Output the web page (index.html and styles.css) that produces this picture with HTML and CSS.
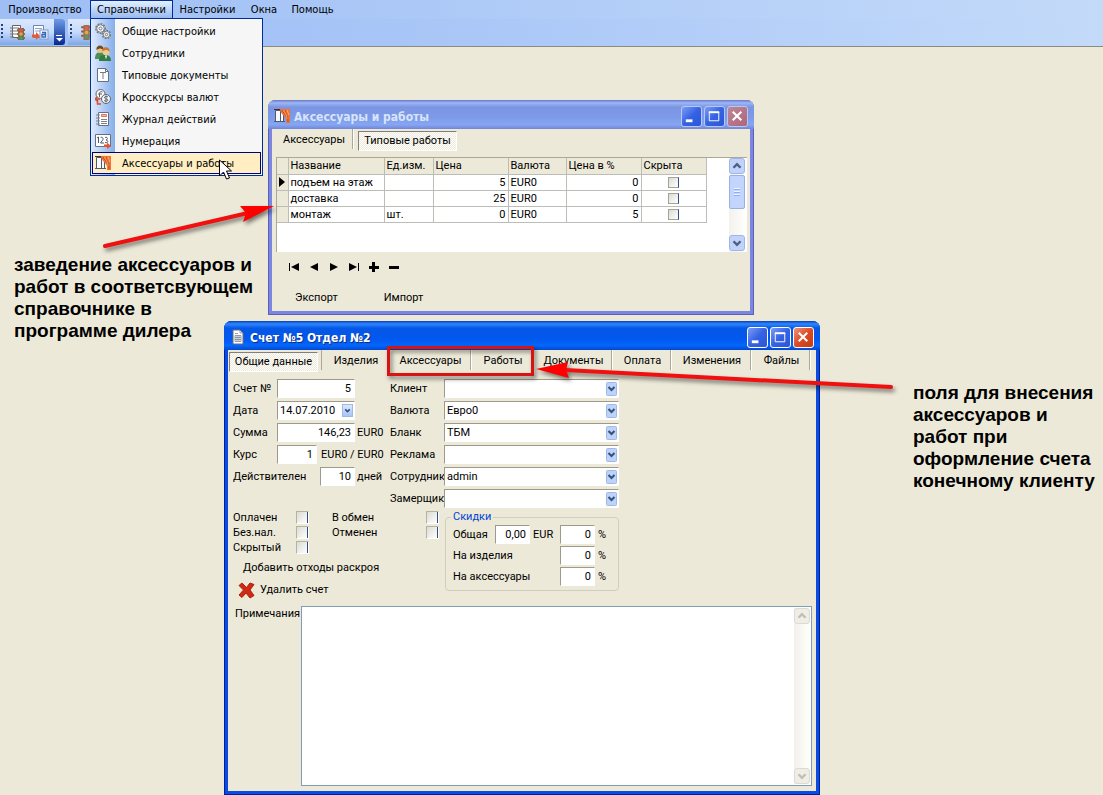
FILE: index.html
```html
<!DOCTYPE html>
<html lang="ru">
<head>
<meta charset="utf-8">
<title>Счет №5 Отдел №2</title>
<link rel="stylesheet" href="styles.css">
</head>
<body>
<svg class="defs" width="0" height="0" aria-hidden="true">
  <defs>
    <symbol id="curtain" viewBox="0 0 16 16">
      <path d="M1.500 2.500h8v11h-8z" fill="#f7f9fd" stroke="#4f5b70"/>
      <path d="M6.500 3v10M0 13.500h11" stroke="#4f5b70" fill="none"/>
      <path d="M0 1.500h16" stroke="#5a2a16"/>
      <path d="M6 1h10v14h-4c1-4-1-6-3-8S6 3 6 1z" fill="#ee7436"/>
      <path d="M8 2c1 3 4 4 5 8M11 2c.5 3 3 5 3 12" stroke="#b6441a" stroke-width=".8" fill="none"/>
      <path d="M9.500 2c1 3 3.500 4 3.500 9M13 2l2 5" stroke="#ffb486" stroke-width=".8" fill="none"/>
    </symbol>
    <symbol id="light" viewBox="0 0 16 16">
      <path d="M3 3h10M3 7h10M3 11h10" stroke="#a0522a" stroke-width="2"/>
      <rect x="5" y="1" width="6" height="14" rx="1" fill="#8c7460"/>
      <circle cx="8" cy="4" r="1.800" fill="#ee5b3c"/><circle cx="8" cy="8" r="1.800" fill="#f3a13c"/><circle cx="8" cy="12" r="1.800" fill="#4fa05c"/>
    </symbol>
    <symbol id="min" viewBox="0 0 20 20"><path d="M4 13h7v3H4z" fill="#fff"/></symbol>
    <symbol id="max" viewBox="0 0 20 20"><path d="M4.500 5.500h10v9h-10z" fill="none" stroke="#fff"/><path d="M4 4.500h11v2H4z" fill="#fff"/></symbol>
    <symbol id="close" viewBox="0 0 20 20"><path d="M5 5l9 9M14 5l-9 9" stroke="#fff" stroke-width="2.200"/></symbol>
    <symbol id="up" viewBox="0 0 16 16"><path d="M4 10l4-4 4 4" fill="none" stroke="currentColor" stroke-width="2.800"/></symbol>
    <symbol id="down" viewBox="0 0 16 16"><path d="M4 6l4 4 4-4" fill="none" stroke="currentColor" stroke-width="2.800"/></symbol>
  </defs>
</svg>

<header class="top">
  <nav class="menubar">
    <button type="button" class="m1">Производство</button>
    <button type="button" class="m2 open" aria-expanded="true">Справочники</button>
    <button type="button" class="m3">Настройки</button>
    <button type="button" class="m4">Окна</button>
    <button type="button" class="m5">Помощь</button>
  </nav>
  <div class="toolbar">
    <div class="bar">
      <span class="grip"></span>
      <button type="button" aria-label="Производство"><svg width="17" height="17" viewBox="0 0 17 17"><path d="M3.500 1.500h8v12h-8z" fill="#fff" stroke="#666"/><path d="M1 4h4M1 7h4M1 10h4M1 13h4M5 4h5M5 7h4M5 10h4" stroke="#777"/><path d="M8 6h8M8 10h8M8 14h8" stroke="#9b4a20" stroke-width="1.500"/><rect x="9" y="4" width="6" height="12" fill="#7c6a58"/><circle cx="12" cy="6" r="1.800" fill="#f0503a"/><circle cx="12" cy="10" r="1.800" fill="#f2a03c"/><circle cx="12" cy="14" r="1.800" fill="#38a35a"/></svg></button>
      <button type="button" aria-label="Экспорт"><svg width="17" height="17" viewBox="0 0 17 17"><path d="M1.500 1.500h10v12h-10z" fill="#fff" stroke="#6d86b4"/><path d="M3 4.500h7M3 7h5" stroke="#91a4c4"/><rect x="8" y="6" width="8" height="9" fill="#f4f8ff" stroke="#7d9bd0"/><path d="M10 8.500h3.500V13H10v-2.500h3" fill="none" stroke="#3065b5" stroke-width="1.400"/><path d="M0 10.500h4V8l4 4-4 4v-2.500H0z" fill="#e85a32"/></svg></button>
      <button type="button" class="more" aria-label="Ещё"><svg width="9" height="9" viewBox="0 0 9 9"><path d="M1 1.500h6" stroke="#fff"/><path d="M1 4h7L4.500 7.500z" fill="#fff"/></svg></button>
    </div>
    <div class="bar second">
      <span class="grip"></span>
      <button type="button" aria-label="Светофор"><svg width="17" height="17"><use href="#light"/></svg></button>
    </div>
  </div>
</header>

<ul class="dropdown">
  <li><button type="button"><svg viewBox="0 0 16 16"><g fill="#f8f8f8" stroke="#737983"><circle cx="5.500" cy="5.500" r="4.600" stroke-width="1.600" stroke-dasharray="2 1"/><circle cx="5.500" cy="5.500" r="3.800"/><circle cx="5.500" cy="5.500" r="1.500"/><circle cx="11.500" cy="11.500" r="4" stroke-width="1.600" stroke-dasharray="2 1"/><circle cx="11.500" cy="11.500" r="3.200"/><circle cx="11.500" cy="11.500" r="1.200"/></g></svg><span>Общие настройки</span></button></li>
  <li><button type="button"><svg viewBox="0 0 16 16"><path d="M0 14c0-5 2-7 5-7s5 2 5 7z" fill="#4b9156"/><circle cx="5" cy="5" r="3" fill="#f2c181"/><path d="M1.500 5c-1-6 8-6 7 0-2-2-4-2-7 0z" fill="#6c4a26"/><path d="M4 16c0-5 2-6 6-6s6 2 6 6z" fill="#337c43"/><circle cx="11" cy="7" r="3.300" fill="#f5c98e"/><path d="M7.500 6.500c-1-6 8-5 7 0-2-2-4-2-7 0z" fill="#be7b32"/><path d="M10 10.500h2l-1 4z" fill="#fff"/></svg><span>Сотрудники</span></button></li>
  <li><button type="button"><svg viewBox="0 0 16 16"><path d="M2.500 1.500h8l3 3v10h-11z" fill="#fff" stroke="#66717f"/><path d="M10.500 1.500v3h3" fill="none" stroke="#66717f"/><path d="M5 5.500h6M8 5.500V12" stroke="#6f7c8c"/></svg><span>Типовые документы</span></button></li>
  <li><button type="button"><svg viewBox="0 0 16 16"><g fill="#f7f7f7" stroke="#5f6670"><circle cx="5.500" cy="5" r="4.500"/><circle cx="11" cy="10" r="4.500"/><path d="M7.500 3c-2-1-3 0-3 2v3M3 5h4M13 8c-2-1-4-.5-3.500 1s3.500.5 3.500 2-2 1.500-4 .5M11 6.500v7" fill="none"/></g><path d="M0 10h5M2 8l-2 2 2 2M2.500 10v5H6" fill="none" stroke="#d94f2f" stroke-width="1.500"/></svg><span>Кросскурсы валют</span></button></li>
  <li><button type="button"><svg viewBox="0 0 16 16"><path d="M3.500 1.500h10v13h-10z" fill="#fff" stroke="#66717f"/><path d="M1 4h4M1 7h4M1 10h4M1 13h4M6 8.500h6M6 10.500h6M6 12.500h6" stroke="#7b828c"/><path d="M6.500 3.500h5v2h-5z" fill="#f5b7ac" stroke="#d77865"/></svg><span>Журнал действий</span></button></li>
  <li><button type="button"><svg viewBox="0 0 16 16"><path d="M.5 1.500h15v12H.5z" fill="#fff" stroke="#66717f"/><path d="M2 5l1.500-1v6M5.500 5c1-1.500 3-.5 2.500 1.500L5.500 10H9M10 4.500c3-1 3 2 1 2.500 3 .5 2 3.500-1 2.500" fill="none" stroke="#4d5560"/><path d="M9 11.500h3v-2l4 3.500-4 3v-2H9z" fill="#e6532f"/></svg><span>Нумерация</span></button></li>
  <li><button type="button" class="hot"><svg><use href="#curtain"/></svg><span>Аксессуары и работы</span></button></li>
</ul>

<main class="desktop">
  <section class="window dir">
    <div class="titlebar">
      <svg class="ticon" width="16" height="16"><use href="#curtain"/></svg>
      <h2>Аксессуары и работы</h2>
      <button type="button" class="cap" aria-label="Свернуть"><svg><use href="#min"/></svg></button>
      <button type="button" class="cap" aria-label="Развернуть"><svg><use href="#max"/></svg></button>
      <button type="button" class="cap x" aria-label="Закрыть"><svg><use href="#close"/></svg></button>
    </div>
    <div class="client">
      <div class="tabs tabs-dir" role="tablist">
        <button type="button" role="tab">Аксессуары</button>
        <button type="button" role="tab" class="active" aria-selected="true">Типовые работы</button>
      </div>
      <div class="gridbox">
        <table>
          <colgroup><col class="c0"><col class="c1"><col class="c2"><col class="c3"><col class="c4"><col class="c3"><col class="c5"></colgroup>
          <thead><tr><th></th><th>Название</th><th>Ед.изм.</th><th>Цена</th><th>Валюта</th><th>Цена в %</th><th>Скрыта</th></tr></thead>
          <tbody>
            <tr><td class="ind"><svg width="6" height="10" viewBox="0 0 6 10"><path d="M0 0l6 5-6 5z"/></svg></td><td>подъем на этаж</td><td></td><td class="n">5</td><td>EUR0</td><td class="n">0</td><td class="k"><input type="checkbox" aria-label="Скрыта"></td></tr>
            <tr><td class="ind"></td><td>доставка</td><td></td><td class="n">25</td><td>EUR0</td><td class="n">0</td><td class="k"><input type="checkbox" aria-label="Скрыта"></td></tr>
            <tr><td class="ind"></td><td>монтаж</td><td>шт.</td><td class="n">0</td><td>EUR0</td><td class="n">5</td><td class="k"><input type="checkbox" aria-label="Скрыта"></td></tr>
          </tbody>
        </table>
        <div class="scroll blue">
          <button type="button" aria-label="Вверх"><svg><use href="#up"/></svg></button>
          <span class="thumb"></span>
          <button type="button" aria-label="Вниз"><svg><use href="#down"/></svg></button>
        </div>
      </div>
      <div class="navigator">
        <button type="button" aria-label="Первая"><svg viewBox="0 0 12 10"><path d="M1 1h1v8H1zM11 1v8L3 5z"/></svg></button>
        <button type="button" aria-label="Предыдущая"><svg viewBox="0 0 12 10"><path d="M10 1v8L2 5z"/></svg></button>
        <button type="button" aria-label="Следующая"><svg viewBox="0 0 12 10"><path d="M2 1v8l8-4z"/></svg></button>
        <button type="button" aria-label="Последняя"><svg viewBox="0 0 12 10"><path d="M10 1h1v8h-1zM1 1v8l8-4z"/></svg></button>
        <button type="button" aria-label="Добавить"><svg viewBox="0 0 12 10"><path d="M4 0h3v4h4v3H7v3H4V7H1V4h3z"/></svg></button>
        <button type="button" aria-label="Удалить"><svg viewBox="0 0 12 10"><path d="M1 4h10v3H1z"/></svg></button>
      </div>
      <div class="links"><button type="button">Экспорт</button><button type="button">Импорт</button></div>
    </div>
  </section>

  <section class="window bill">
    <div class="titlebar">
      <svg class="ticon" width="16" height="16" viewBox="0 0 16 16"><path d="M3 1h7l3 3v11H3z" fill="#fff" stroke="#66717f"/><path d="M10 1v3h3M5 4.500h3M5 6.500h6v6H5zM5 8.500h6M5 10.500h6M7 6.500v6M9 6.500v6" fill="none" stroke="#7d8794" stroke-width=".8"/></svg>
      <h2>Счет №5 Отдел №2</h2>
      <button type="button" class="cap" aria-label="Свернуть"><svg><use href="#min"/></svg></button>
      <button type="button" class="cap" aria-label="Развернуть"><svg><use href="#max"/></svg></button>
      <button type="button" class="cap x" aria-label="Закрыть"><svg><use href="#close"/></svg></button>
    </div>
    <div class="client">
      <div class="tabs tabs-bill" role="tablist">
        <button type="button" role="tab" class="active" aria-selected="true">Общие данные</button>
        <button type="button" role="tab">Изделия</button>
        <button type="button" role="tab">Аксессуары</button>
        <button type="button" role="tab">Работы</button>
        <button type="button" role="tab">Документы</button>
        <button type="button" role="tab">Оплата</button>
        <button type="button" role="tab">Изменения</button>
        <button type="button" role="tab">Файлы</button>
      </div>
      <form class="form">
        <div class="fields">
          <div class="col">
            <div class="row"><label for="no">Счет №</label><input id="no" class="w78 num" value="5"></div>
            <div class="row"><label for="dt">Дата</label><span class="date w78"><input id="dt" value="14.07.2010"><button type="button" aria-label="Календарь"><svg><use href="#down"/></svg></button></span></div>
            <div class="row"><label for="sum">Сумма</label><input id="sum" class="w78 num" value="146,23"><span class="unit">EUR0</span></div>
            <div class="row"><label for="rate">Курс</label><input id="rate" class="w40 num" value="1"><span class="unit">EUR0 / EUR0</span></div>
            <div class="row"><label for="days" class="long">Действителен</label><input id="days" class="w35 num" value="10"><span class="unit">дней</span></div>
          </div>
          <div class="col right">
            <div class="row"><label for="cl">Клиент</label><select id="cl"><option></option></select></div>
            <div class="row"><label for="cur">Валюта</label><select id="cur"><option>Евро0</option></select></div>
            <div class="row"><label for="bl">Бланк</label><select id="bl"><option>ТБМ</option></select></div>
            <div class="row"><label for="ad">Реклама</label><select id="ad"><option></option></select></div>
            <div class="row"><label for="em">Сотрудник</label><select id="em"><option>admin</option></select></div>
            <div class="row"><label for="me">Замерщик</label><select id="me"><option></option></select></div>
          </div>
        </div>
        <div class="lower">
          <div class="flags">
            <div class="checks">
              <label for="f1">Оплачен</label><input type="checkbox" id="f1"><label for="f4">В обмен</label><input type="checkbox" id="f4">
              <label for="f2">Без.нал.</label><input type="checkbox" id="f2"><label for="f5">Отменен</label><input type="checkbox" id="f5">
              <label for="f3">Скрытый</label><input type="checkbox" id="f3">
            </div>
            <button type="button" class="act">Добавить отходы раскроя</button>
            <button type="button" class="act del"><svg width="18" height="17" viewBox="0 0 18 17"><path d="M4 1l4.500 4.500L12 1l4 1.500L12 8l4 5.500-4 2.500-4-5-4 4.500L1 13l4.500-5L1 3.500z" fill="#cf2b12" stroke="#a82410"/></svg>Удалить счет</button>
          </div>
          <fieldset>
            <legend>Скидки</legend>
            <div class="drow"><label for="d1">Общая</label><input id="d1" class="w35 num" value="0,00"><span class="eur">EUR</span><input class="w35 num" aria-label="Общая, %" value="0"><span>%</span></div>
            <div class="drow"><label for="d2">На изделия</label><input id="d2" class="w35 num" value="0"><span>%</span></div>
            <div class="drow"><label for="d3">На аксессуары</label><input id="d3" class="w35 num" value="0"><span>%</span></div>
          </fieldset>
        </div>
        <div class="notes">
          <label for="nt">Примечания</label>
          <div class="memo">
            <textarea id="nt"></textarea>
            <div class="scroll grey">
              <button type="button" aria-label="Вверх"><svg><use href="#up"/></svg></button>
              <button type="button" aria-label="Вниз"><svg><use href="#down"/></svg></button>
            </div>
          </div>
        </div>
      </form>
    </div>
  </section>

  <p class="callout one">заведение аксессуаров и<br>работ в соответсвующем<br>справочнике в<br>программе дилера</p>
  <p class="callout two">поля для внесения<br>аксессуаров и<br>работ при<br>оформление счета<br>конечному клиенту</p>
</main>

<svg class="marks" width="1103" height="795" viewBox="0 0 1103 795" aria-hidden="true">
  <g class="shadow">
    <path d="M105 246L248 213" stroke="#f01010" stroke-width="4" stroke-linecap="round"/>
    <path d="M274 206l-34 0 6 7-3 9z" fill="#f00"/>
    <path d="M891 387L565 370" stroke="#f01010" stroke-width="4" stroke-linecap="round"/>
    <path d="M536 369l32-7-2 8 3 8z" fill="#f00"/>
    <path d="M388.500 347.500h144v27h-144z" fill="none" stroke="#d81313" stroke-width="3"/>
  </g>
  <path d="M219.500 160v16l4-4 3 7 3-1-3-7h5z" fill="#fff" stroke="#000"/>
</svg>
</body>
</html>
```
FILE: styles.css
```css
* { box-sizing: border-box; }
body {
  margin: 0;
  min-height: 100vh;
  overflow: hidden;
  position: relative;
  background: #ece9d8;
  color: #000;
  font: 11px/16px Roboto, "Liberation Sans", sans-serif;
}
button, input, select, textarea { font: inherit; color: inherit; margin: 0; }
button { border: 0; padding: 0; background: none; white-space: nowrap; }
svg { display: block; flex: none; }
.defs { position: absolute; }

/* Menu and toolbar */
.top { background: #a6c3f7; border-bottom: 1px solid #8b8b80; font: 11px/16px "DejaVu Sans Condensed", "Noto Sans", sans-serif; }
.menubar { display: flex; height: 19px; background: linear-gradient(90deg, #9ebef5, #c3daf9); }
.menubar button { height: 19px; }
.m1 { width: 90px; }
.m2 { width: 83px; }
.m3 { width: 69px; }
.m4 { width: 44px; }
.m5 { width: 53px; }
.menubar .open { border: 1px solid #002d96; border-bottom: 0; background: linear-gradient(#e3efff, #93b7ee); }
.toolbar { display: flex; gap: 3px; height: 27px; background: linear-gradient(90deg, #9ebef5, #a9c6f7 40%, #c3daf9); }
.bar { display: flex; align-items: center; gap: 6px; height: 26px; width: 65px; background: linear-gradient(#dbe9ff, #c6dafa 50%, #7ea7e6); border-radius: 0 3px 3px 0; }
.second { width: 180px; }
.grip { width: 2px; height: 16px; margin-left: 1px; background: repeating-linear-gradient(#27417f 0 2px, transparent 2px 4px); flex: none; }
.bar button { flex: none; }
.second .grip { margin-left: 2px; }
.bar .more { width: 11px; height: 26px; margin-left: -1px; display: flex; align-items: flex-end; justify-content: center; padding-bottom: 2px; background: linear-gradient(#6f9be6, #06288f); border-radius: 0 3px 3px 0; }

.dropdown {
  position: absolute; z-index: 3; top: 18px; left: 90px; width: 173px;
  margin: 0; padding: 1px; list-style: none;
  border: 1px solid #002d96;
  background: linear-gradient(90deg, #dfebff, #86aeea 24px, #f6f6f6 24px);
  font: 11px/16px "DejaVu Sans Condensed", "Noto Sans", sans-serif;
}
.dropdown button { display: flex; align-items: center; gap: 11px; width: 100%; height: 22px; padding: 0 2px; border: 1px solid transparent; text-align: left; }
.dropdown span { padding-top: 2px; }
.dropdown svg { width: 16px; height: 16px; }
.dropdown .hot { border-color: #000080; background: #ffeec2; }

/* Windows */
.window { position: absolute; padding: 0 4px 4px; border-radius: 8px 8px 0 0; }
.dir { left: 268px; top: 100px; width: 486px; background: #7a86df; box-shadow: inset 0 0 0 1px #5a5fbe; }
.bill { left: 224px; top: 321px; width: 596px; background: #0a4be0; box-shadow: inset 0 0 0 1px #001ea0; }
.titlebar { display: flex; align-items: center; gap: 2px; height: 29px; margin: 0 -4px; padding: 3px 6px 0; border-radius: 7px 7px 0 0; }
.dir .titlebar { background: linear-gradient(#6a76ce, #9cb6f4 10%, #7b95e2 25%, #7d9ae8 60%, #86a6f2 85%, #7285d8); color: #d8e4f8; }
.bill .titlebar { background: linear-gradient(#0840b8, #2f86ff 10%, #0557e4 25%, #0257ee 60%, #0566fb 85%, #0148cc); color: #fff; }
.bill h2 { text-shadow: 1px 1px #0a2f80; }
.titlebar h2 { flex: 1; margin: 0 0 0 2px; padding-top: 2px; font: bold 12px/18px "DejaVu Sans Condensed", "Noto Sans", sans-serif; white-space: nowrap; }
.cap { width: 21px; height: 21px; border: 1px solid #fff; border-radius: 3px; background: linear-gradient(135deg, #7b9df5, #3562e4 50%, #2b56d8); }
.cap svg { width: 19px; height: 19px; }
.cap.x { background: linear-gradient(135deg, #f0937a, #dc4a24 50%, #c63b14); }
.dir .cap { border-color: #b9c8f3; }
.dir .cap.x { background: linear-gradient(135deg, #bb8898, #b0647a); }
.client { background: #ece9d8; }

.tabs { display: grid; height: 22px; }
.tabs-dir { grid-template-columns: 81px 107px; }
.tabs-bill { grid-template-columns: 93px 67px 83px 62px 79px 59px 80px 59px; }
.tabs button { border-right: 1px solid #aca899; box-shadow: 1px 0 #fff; height: 20px; padding: 2px 0 0 3px; }
.tabs-dir button:first-child { padding-left: 4px; }
.tabs .active {
  margin: 2px 3px 0 5px; padding: 0; height: 20px; border: 1px solid; border-color: #808080 #fff #fff #808080; box-shadow: none;
  background: repeating-conic-gradient(#fff 0 25%, #ece9d8 0 50%) 0 0 / 2px 2px;
}
.tabs-bill .active { margin: 2px 3px 0 1px; }
.tabs-bill .active + button { border-left: 1px solid #aca899; }

/* Grid */
.gridbox { display: flex; justify-content: space-between; height: 95px; margin: 6px 3px 0 4px; background: #fff; border-top: 1px solid #aca899; border-left: 1px solid #aca899; }
table { border-collapse: collapse; table-layout: fixed; width: 429px; align-self: flex-start; }
.c0 { width: 11px; } .c1 { width: 96px; } .c2 { width: 49px; } .c3 { width: 75px; } .c4 { width: 58px; } .c5 { width: 65px; }
th, td { height: 16px; padding: 0 2px; line-height: 15px; font-weight: normal; text-align: left; white-space: nowrap; border-right: 1px solid #bdbdb8; border-bottom: 1px solid #bdbdb8; }
th, .ind { background: #ece9d8; }
.n { text-align: right; }
.k { text-align: center; }
.ind svg { width: 6px; height: 10px; }
.k input { display: block; margin: 0 auto; width: 11px; height: 11px; }

input[type="checkbox"] { appearance: none; border: 1px solid #a5a297; border-right: 1px solid #2b4f86; background: linear-gradient(135deg, #dcdcd4, #fff); }

.scroll { display: flex; flex-direction: column; justify-content: space-between; width: 16px; background: linear-gradient(90deg, #f3f1ec, #fefefb); }
.scroll button { width: 16px; height: 16px; border: 1px solid #fff; border-radius: 3px; }
.scroll svg { width: 14px; height: 14px; }
.blue { margin-right: 2px; color: #4d6185; padding-bottom: 1px; }
.blue button { background: #c1d3fb; border-color: #9eb5e8; }
.thumb { height: 34px; margin: 1px 0 auto; border: 1px solid #98b0e4; border-radius: 2px; background: repeating-linear-gradient(#eef4fe 0 1px, #8cb0f8 1px 2px, transparent 2px 3px) center / 6px 9px no-repeat, #c3d5fd; }
.grey { color: #c0bfb5; }
.grey button { background: #efeee6; border-color: #dcdbd2; }

.navigator { display: flex; gap: 8px; padding: 10px 0 0 16px; }
.navigator svg { width: 12px; height: 10px; }
.links { display: flex; gap: 46px; padding: 18px 0 5px 23px; }

/* Form */
.form { padding: 7px 4px 5px 5px; }
.fields { display: flex; }
.col { width: 157px; display: grid; align-content: start; gap: 3px; }
.right { width: 229px; }
.row { display: flex; align-items: center; height: 19px; white-space: nowrap; overflow: hidden; }
.row label { width: 44px; flex: none; }
.row .long { width: 87px; }
.right label { width: 54px; }
.col:first-child { width: 153px; margin-right: 4px; }
.form input:not([type]), .form select { height: 19px; min-width: 0; border: 1px solid; border-color: #9d9a8b #fff #fff #9d9a8b; border-radius: 0; background-color: #fff; }
.form .num { text-align: right; padding: 0 3px; }
.w78 { width: 78px; }
.w40 { width: 40px; }
.w35 { width: 35px; }
.row .unit { padding-left: 2px; }
.row .w40 + .unit { padding-left: 4px; }
.date { display: flex; position: relative; }
.form .date input { width: 100%; padding: 0 2px; }
.date button { position: absolute; right: 2px; top: 3px; width: 11px; height: 13px; color: #35507f; background: linear-gradient(#dbe8ff, #a9c3f5); border: 1px solid #a0b8e6; }
.date button svg { width: 9px; height: 11px; }
.form select {
  appearance: none; width: 175px; padding: 0 2px;
  background-image: url("data:image/svg+xml,%3Csvg xmlns='http://www.w3.org/2000/svg' width='11' height='14'%3E%3Crect x='.5' y='.5' width='10' height='13' rx='1' fill='%23bed3fa' stroke='%23a0b8e6'/%3E%3Cpath d='M2.500 5l3 3 3-3' fill='none' stroke='%2335507f' stroke-width='2'/%3E%3C/svg%3E");
  background-repeat: no-repeat; background-position: right 1px center;
}

.lower { display: flex; align-items: flex-start; gap: 4px; padding: 2px 0 5px; }
.flags { width: 208px; flex: none; }
.checks { display: grid; grid-template-columns: 63px 36px 94px 13px; grid-auto-rows: 15px; align-items: center; }
.form .checks input { width: 13px; height: 13px; border-color: #b5b2a4 #fff #fff #b5b2a4; box-shadow: inset -1px 0 #2b4f86; }
.act { display: flex; align-items: center; height: 22px; margin-left: 10px; }
.checks + .act { margin-top: 2px; }
.del { margin-left: 5px; gap: 4px; }
fieldset { width: 174px; margin: 0; padding: 0 0 3px 7px; border: 1px solid #d0cfbe; border-radius: 4px; min-width: 0; }
legend { padding: 0 2px; color: #0046d5; line-height: 14px; margin-left: -2px; }
.drow { display: flex; align-items: center; height: 21px; gap: 3px; }
.drow label { margin-right: auto; }
.drow .eur { width: 24px; }
.drow span:last-child { width: 20px; }

.notes { display: flex; padding: 0 0 0 2px; }
.notes label { width: 66px; flex: none; }
.memo { flex: 1; display: flex; height: 180px; border: 1px solid #7f9db9; background: #fff; }
.memo textarea { flex: 1; border: 0; resize: none; background: #fff; outline: 0; }
.memo .scroll { margin: 1px; }

/* Annotations */
.callout { position: absolute; margin: 0; font: bold 19px/22px "Liberation Sans", Arial, sans-serif; white-space: nowrap; }
.one { left: 14px; top: 254px; }
.two { left: 913px; top: 382px; }
.marks { position: absolute; left: 0; top: 0; z-index: 4; pointer-events: none; }
.shadow { filter: drop-shadow(2px 3px 2px rgba(0, 0, 0, .5)); }
```
